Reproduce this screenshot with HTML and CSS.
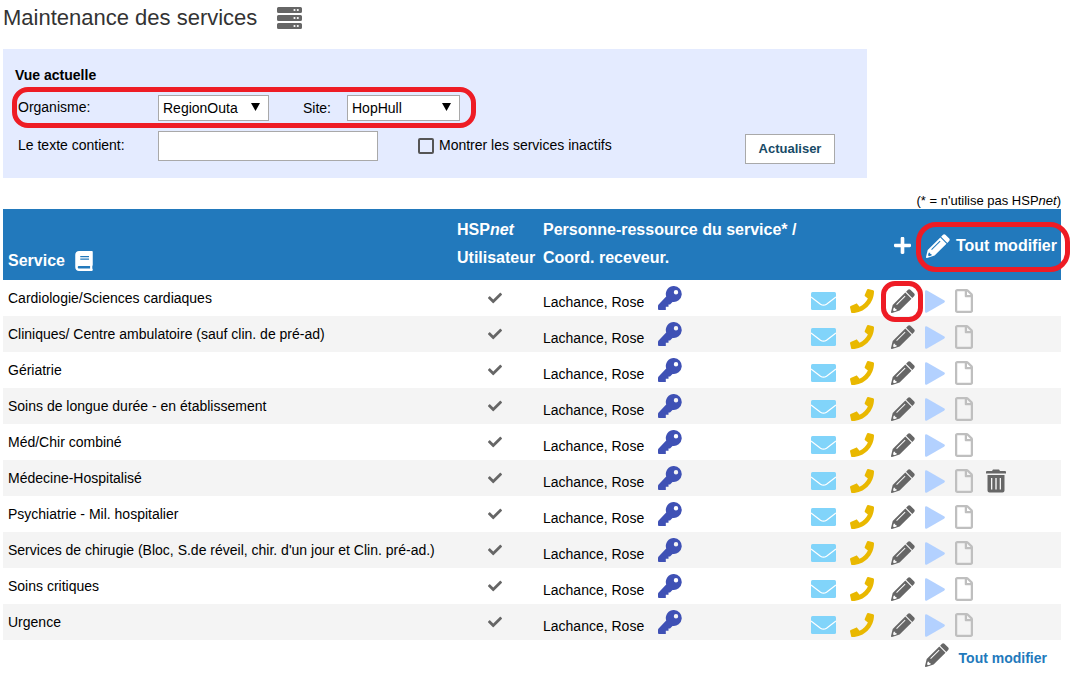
FILE: index.html
```html
<!DOCTYPE html>
<html lang="fr">
<head>
<meta charset="utf-8">
<title>Maintenance des services</title>
<link rel="stylesheet" href="styles.css">
</head>
<body>
<svg class="sprite" aria-hidden="true">
  <symbol id="key" viewBox="0 0 24 24"><path fill-rule="evenodd" d="M16 0a8 8 0 1 1-1.500 15.900L12 18.500H10.500v2.200H7.800V24H1q-1 0-1-1v-3q0-1 .6-1.600L8.200 10.500A8 8 0 0 1 16 0zm2 4a2.200 2.200 0 1 0 0 4.400A2.200 2.200 0 0 0 18 4z"/></symbol>
  <symbol id="pencil" viewBox="0 0 24 24"><path fill-rule="evenodd" d="M17 .8q1.200-1 2.400 0l3.800 3.800q1 1.200 0 2.400l-1.900 1.900-6.200-6.200zM14.300 3.500l6.200 6.200L8.600 21.600 1 23.900q-1.200.2-1-1L1.700 16zM5.200 15.300l.7.7 8.600-8.600-.7-.7zM2.700 18.800l-.7 2.400 1 1 2.500-.8v-1.500H4.200v-1.100z"/></symbol>
  <symbol id="phone" viewBox="0 0 512 512"><path d="M493.400 24.600l-104-24c-11.300-2.600-22.900 3.300-27.500 13.900l-48 112c-4.200 9.800-1.400 21.300 6.900 28l60.600 49.600c-36 76.700-98.900 140.500-177.200 177.200l-49.600-60.600c-6.800-8.300-18.200-11.100-28-6.900l-112 48C3.900 366.500-2 378.100.6 389.400l24 104C27.100 504.200 36.700 512 48 512c256.100 0 464-207.500 464-464 0-11.200-7.700-20.900-18.600-23.400z"/></symbol>
  <symbol id="mail" viewBox="0 0 25 18"><rect width="25" height="18" rx="1.500"/><path d="M0 5l9.500 7.200q3 2 6 0L25 5" fill="none" stroke="#fff" stroke-width="1.200"/></symbol>
  <symbol id="play" viewBox="0 0 20 23"><path d="M0 1.500Q.2-.3 2 .6L19 10.300q1.800 1.200 0 2.400L2 22.400q-1.800.9-2-.9z"/></symbol>
  <symbol id="file" viewBox="0 0 384 512"><path d="M369.900 97.900L286 14C277 5 264.800 0 252.100 0H48C21.500 0 0 21.500 0 48v416c0 26.500 21.500 48 48 48h288c26.500 0 48-21.500 48-48V131.900c0-12.700-5.100-25-14.100-34zM332.100 128H256V51.900l76.100 76.100zM48 464V48h160v104c0 13.300 10.700 24 24 24h104v288H48z"/></symbol>
  <symbol id="check" viewBox="0 0 512 512"><path d="M173.900 439.400l-166.400-166.400c-10-10-10-26.200 0-36.200l36.200-36.200c10-10 26.200-10 36.200 0L192 312.700 432.100 72.600c10-10 26.200-10 36.200 0l36.200 36.200c10 10 10 26.200 0 36.200l-294.400 294.400c-10 10-26.200 10-36.200 0z"/></symbol>
  <symbol id="plus" viewBox="0 32 448 448"><path d="M416 208H272V64c0-17.670-14.330-32-32-32h-32c-17.670 0-32 14.330-32 32v144H32c-17.670 0-32 14.330-32 32v32c0 17.670 14.330 32 32 32h144v144c0 17.670 14.330 32 32 32h32c17.670 0 32-14.330 32-32V304h144c17.670 0 32-14.330 32-32v-32c0-17.670-14.330-32-32-32z"/></symbol>
  <symbol id="book" viewBox="0 0 448 512"><path d="M448 360V24c0-13.300-10.700-24-24-24H96C43 0 0 43 0 96v320c0 53 43 96 96 96h328c13.300 0 24-10.700 24-24v-16c0-7.500-3.500-14.300-8.900-18.700-4.200-15.400-4.200-59.300 0-74.700 5.400-4.300 8.900-11.100 8.900-18.600zM128 134c0-3.300 2.700-6 6-6h212c3.300 0 6 2.700 6 6v20c0 3.300-2.700 6-6 6H134c-3.300 0-6-2.700-6-6v-20zm0 64c0-3.300 2.700-6 6-6h212c3.300 0 6 2.700 6 6v20c0 3.300-2.700 6-6 6H134c-3.300 0-6-2.700-6-6v-20zm253.400 250H96c-17.700 0-32-14.300-32-32 0-17.600 14.400-32 32-32h285.400c-1.900 17.100-1.900 46.900 0 64z"/></symbol>
  <symbol id="trash" viewBox="0 0 20 24"><path fill-rule="evenodd" d="M1 2h5l1-1.500h6L14 2h5a1 1 0 0 1 1 1v1.500H0V3a1 1 0 0 1 1-1zM1.500 6h17v15.500a2 2 0 0 1-2 2h-13a2 2 0 0 1-2-2zM5 9v11.500h1.300V9zm4.300 0v11.500h1.400V9zm4.400 0v11.500H15V9z"/></symbol>
  <symbol id="server" viewBox="0 0 25 22"><path fill-rule="evenodd" d="M1.500 0h22A1.500 1.500 0 0 1 25 1.500v3A1.500 1.500 0 0 1 23.500 6h-22A1.500 1.500 0 0 1 0 4.500v-3A1.500 1.500 0 0 1 1.500 0zM1.500 8h22A1.500 1.500 0 0 1 25 9.500v3a1.500 1.500 0 0 1-1.500 1.500h-22A1.500 1.500 0 0 1 0 12.500v-3A1.500 1.500 0 0 1 1.500 8zM1.500 16h22a1.500 1.500 0 0 1 1.500 1.500v3a1.500 1.500 0 0 1-1.500 1.500h-22A1.500 1.500 0 0 1 0 20.500v-3A1.500 1.500 0 0 1 1.500 16z"/><g fill="#fff"><circle cx="17.500" cy="3" r="1.100"/><circle cx="20.800" cy="3" r="1.100"/><circle cx="17.500" cy="11" r="1.100"/><circle cx="20.800" cy="11" r="1.100"/><circle cx="17.500" cy="19" r="1.100"/><circle cx="20.800" cy="19" r="1.100"/></g></symbol>
  <symbol id="arrow" viewBox="0 0 9 8"><path d="M0 0h9L4.500 8z"/></symbol>
</svg>

<h1 class="title">Maintenance des services <svg class="icon-server"><use href="#server"/></svg></h1>

<form class="filters">
  <h2 class="filters-title">Vue actuelle</h2>
  <div class="row row-marked">
    <label class="label" for="org">Organisme:</label>
    <span class="picker picker-org"><select id="org"><option>RegionOuta</option></select><svg><use href="#arrow"/></svg></span>
    <label class="label-site" for="site">Site:</label>
    <span class="picker"><select id="site"><option>HopHull</option></select><svg><use href="#arrow"/></svg></span>
  </div>
  <div class="row">
    <label class="label" for="text">Le texte contient:</label>
    <input class="text-box" id="text" type="text">
    <label class="check-label"><input type="checkbox">Montrer les services inactifs</label>
    <button class="refresh" type="button">Actualiser</button>
  </div>
</form>

<p class="note">(* = n'utilise pas HSP<i>net</i>)</p>

<table class="services">
  <colgroup><col><col class="col-user"><col class="col-contact"><col class="col-actions"></colgroup>
  <thead>
    <tr>
      <th class="head-service"><span class="service-title">Service <svg class="icon-book"><use href="#book"/></svg></span></th>
      <th>HSP<i>net</i><br>Utilisateur</th>
      <th>Personne-ressource du service* /<br>Coord. receveur.</th>
      <th class="head-actions">
        <div class="head-tools">
          <button type="button" aria-label="Ajouter"><svg class="icon-plus"><use href="#plus"/></svg></button>
          <button type="button" class="edit-all"><svg class="icon-pencil"><use href="#pencil"/></svg>Tout modifier</button>
        </div>
      </th>
    </tr>
  </thead>
  <tbody>
    <tr>
      <td>Cardiologie/Sciences cardiaques</td>
      <td class="user"><svg><use href="#check"/></svg></td>
      <td><div class="contact">Lachance, Rose <svg><use href="#key"/></svg></div></td>
      <td class="actions"><div class="tools"><button type="button" aria-label="Courriel" class="mail"><svg><use href="#mail"/></svg></button><button type="button" aria-label="Appeler" class="phone"><svg><use href="#phone"/></svg></button><button type="button" aria-label="Modifier" class="edit edit-marked"><svg><use href="#pencil"/></svg></button><button type="button" aria-label="Ouvrir" class="play"><svg><use href="#play"/></svg></button><button type="button" aria-label="Document" class="file"><svg><use href="#file"/></svg></button></div></td>
    </tr>
    <tr>
      <td>Cliniques/ Centre ambulatoire (sauf clin. de pré-ad)</td>
      <td class="user"><svg><use href="#check"/></svg></td>
      <td><div class="contact">Lachance, Rose <svg><use href="#key"/></svg></div></td>
      <td class="actions"><div class="tools"><button type="button" aria-label="Courriel" class="mail"><svg><use href="#mail"/></svg></button><button type="button" aria-label="Appeler" class="phone"><svg><use href="#phone"/></svg></button><button type="button" aria-label="Modifier" class="edit"><svg><use href="#pencil"/></svg></button><button type="button" aria-label="Ouvrir" class="play"><svg><use href="#play"/></svg></button><button type="button" aria-label="Document" class="file"><svg><use href="#file"/></svg></button></div></td>
    </tr>
    <tr>
      <td>Gériatrie</td>
      <td class="user"><svg><use href="#check"/></svg></td>
      <td><div class="contact">Lachance, Rose <svg><use href="#key"/></svg></div></td>
      <td class="actions"><div class="tools"><button type="button" aria-label="Courriel" class="mail"><svg><use href="#mail"/></svg></button><button type="button" aria-label="Appeler" class="phone"><svg><use href="#phone"/></svg></button><button type="button" aria-label="Modifier" class="edit"><svg><use href="#pencil"/></svg></button><button type="button" aria-label="Ouvrir" class="play"><svg><use href="#play"/></svg></button><button type="button" aria-label="Document" class="file"><svg><use href="#file"/></svg></button></div></td>
    </tr>
    <tr>
      <td>Soins de longue durée - en établissement</td>
      <td class="user"><svg><use href="#check"/></svg></td>
      <td><div class="contact">Lachance, Rose <svg><use href="#key"/></svg></div></td>
      <td class="actions"><div class="tools"><button type="button" aria-label="Courriel" class="mail"><svg><use href="#mail"/></svg></button><button type="button" aria-label="Appeler" class="phone"><svg><use href="#phone"/></svg></button><button type="button" aria-label="Modifier" class="edit"><svg><use href="#pencil"/></svg></button><button type="button" aria-label="Ouvrir" class="play"><svg><use href="#play"/></svg></button><button type="button" aria-label="Document" class="file"><svg><use href="#file"/></svg></button></div></td>
    </tr>
    <tr>
      <td>Méd/Chir combiné</td>
      <td class="user"><svg><use href="#check"/></svg></td>
      <td><div class="contact">Lachance, Rose <svg><use href="#key"/></svg></div></td>
      <td class="actions"><div class="tools"><button type="button" aria-label="Courriel" class="mail"><svg><use href="#mail"/></svg></button><button type="button" aria-label="Appeler" class="phone"><svg><use href="#phone"/></svg></button><button type="button" aria-label="Modifier" class="edit"><svg><use href="#pencil"/></svg></button><button type="button" aria-label="Ouvrir" class="play"><svg><use href="#play"/></svg></button><button type="button" aria-label="Document" class="file"><svg><use href="#file"/></svg></button></div></td>
    </tr>
    <tr>
      <td>Médecine-Hospitalisé</td>
      <td class="user"><svg><use href="#check"/></svg></td>
      <td><div class="contact">Lachance, Rose <svg><use href="#key"/></svg></div></td>
      <td class="actions"><div class="tools"><button type="button" aria-label="Courriel" class="mail"><svg><use href="#mail"/></svg></button><button type="button" aria-label="Appeler" class="phone"><svg><use href="#phone"/></svg></button><button type="button" aria-label="Modifier" class="edit"><svg><use href="#pencil"/></svg></button><button type="button" aria-label="Ouvrir" class="play"><svg><use href="#play"/></svg></button><button type="button" aria-label="Document" class="file"><svg><use href="#file"/></svg></button><button type="button" aria-label="Supprimer" class="trash"><svg><use href="#trash"/></svg></button></div></td>
    </tr>
    <tr>
      <td>Psychiatrie - Mil. hospitalier</td>
      <td class="user"><svg><use href="#check"/></svg></td>
      <td><div class="contact">Lachance, Rose <svg><use href="#key"/></svg></div></td>
      <td class="actions"><div class="tools"><button type="button" aria-label="Courriel" class="mail"><svg><use href="#mail"/></svg></button><button type="button" aria-label="Appeler" class="phone"><svg><use href="#phone"/></svg></button><button type="button" aria-label="Modifier" class="edit"><svg><use href="#pencil"/></svg></button><button type="button" aria-label="Ouvrir" class="play"><svg><use href="#play"/></svg></button><button type="button" aria-label="Document" class="file"><svg><use href="#file"/></svg></button></div></td>
    </tr>
    <tr>
      <td>Services de chirugie (Bloc, S.de réveil, chir. d'un jour et Clin. pré-ad.)</td>
      <td class="user"><svg><use href="#check"/></svg></td>
      <td><div class="contact">Lachance, Rose <svg><use href="#key"/></svg></div></td>
      <td class="actions"><div class="tools"><button type="button" aria-label="Courriel" class="mail"><svg><use href="#mail"/></svg></button><button type="button" aria-label="Appeler" class="phone"><svg><use href="#phone"/></svg></button><button type="button" aria-label="Modifier" class="edit"><svg><use href="#pencil"/></svg></button><button type="button" aria-label="Ouvrir" class="play"><svg><use href="#play"/></svg></button><button type="button" aria-label="Document" class="file"><svg><use href="#file"/></svg></button></div></td>
    </tr>
    <tr>
      <td>Soins critiques</td>
      <td class="user"><svg><use href="#check"/></svg></td>
      <td><div class="contact">Lachance, Rose <svg><use href="#key"/></svg></div></td>
      <td class="actions"><div class="tools"><button type="button" aria-label="Courriel" class="mail"><svg><use href="#mail"/></svg></button><button type="button" aria-label="Appeler" class="phone"><svg><use href="#phone"/></svg></button><button type="button" aria-label="Modifier" class="edit"><svg><use href="#pencil"/></svg></button><button type="button" aria-label="Ouvrir" class="play"><svg><use href="#play"/></svg></button><button type="button" aria-label="Document" class="file"><svg><use href="#file"/></svg></button></div></td>
    </tr>
    <tr>
      <td>Urgence</td>
      <td class="user"><svg><use href="#check"/></svg></td>
      <td><div class="contact">Lachance, Rose <svg><use href="#key"/></svg></div></td>
      <td class="actions"><div class="tools"><button type="button" aria-label="Courriel" class="mail"><svg><use href="#mail"/></svg></button><button type="button" aria-label="Appeler" class="phone"><svg><use href="#phone"/></svg></button><button type="button" aria-label="Modifier" class="edit"><svg><use href="#pencil"/></svg></button><button type="button" aria-label="Ouvrir" class="play"><svg><use href="#play"/></svg></button><button type="button" aria-label="Document" class="file"><svg><use href="#file"/></svg></button></div></td>
    </tr>
  </tbody>
</table>

<div class="footer">
  <button type="button" class="edit-all-bottom"><svg class="icon-pencil"><use href="#pencil"/></svg>Tout modifier</button>
</div>
</body>
</html>
```

FILE: styles.css
```css
* { box-sizing: border-box; }

body {
  margin: 0;
  padding: 0 13px 0 3px;
  background: #fff;
  color: #000;
  font: 14px/18px "Liberation Sans", Arial, sans-serif;
}

button, input, select { font: inherit; color: inherit; }
button { margin: 0; padding: 0; border: 0; background: none; cursor: pointer; }
svg { display: block; fill: currentColor; flex: none; }
.sprite { position: absolute; width: 0; height: 0; }

.title {
  display: flex;
  align-items: center;
  gap: 20px;
  margin: 0 0 13px;
  color: #333;
  font-size: 22px;
  font-weight: 400;
  line-height: 36px;
}
.icon-server { width: 25px; height: 22px; color: #666; }

/* Filter panel */
.filters {
  display: flex;
  flex-direction: column;
  gap: 10px;
  max-width: 864px;
  padding: 17px 32px 14px 12px;
  background: #e4ebff;
}
.filters-title { margin: 0 0 1px; font-size: 14px; line-height: 18px; }
.row { display: flex; align-items: flex-start; padding-left: 3px; }
.label { width: 140px; line-height: 28px; }
.row-marked { position: relative; align-self: flex-start; }
.row-marked .label { line-height: 24px; }
.label-site { width: 44px; margin-left: 34px; line-height: 26px; }
.picker { position: relative; width: 113px; }
.picker-org { width: 111px; }
.picker select {
  display: block;
  width: 100%;
  height: 26px;
  padding: 0 20px 0 4px;
  border: 1px solid #a9a9a9;
  border-radius: 0;
  background: #fff;
  appearance: none;
}
.picker svg {
  position: absolute;
  top: 8px;
  right: 9px;
  width: 9px;
  height: 8px;
  pointer-events: none;
}
.text-box {
  width: 220px;
  height: 30px;
  padding: 0 4px;
  border: 1px solid #a9a9a9;
  background: #fff;
}
.check-label {
  display: flex;
  align-items: center;
  gap: 5px;
  margin-left: 40px;
  line-height: 29px;
}
.check-label input {
  width: 16px;
  height: 16px;
  margin: 0;
  border: 2px solid #555;
  border-radius: 2px;
  appearance: none;
}
.check-label input:checked { background: #555; }
.refresh {
  width: 90px;
  height: 30px;
  margin: 3px 0 0 auto;
  border: 1px solid #a9a9a9;
  background: #fff;
  color: #174a66;
  font-size: 13px;
  font-weight: 700;
}

/* Red highlight rings */
.row-marked::after, .edit-all::after, .edit-marked::after {
  content: "";
  position: absolute;
  border: 5px solid #ee1c25;
  border-radius: 16px;
  pointer-events: none;
}
.row-marked::after { inset: -8px -16px -7px -3px; }
.edit-all::after { inset: -10px -13px -12px -10px; border-radius: 20px; }
.edit-marked::after { inset: -8px -8px -9px -10px; border-radius: 14px; }

.note { margin: 15px 0 0; font-size: 13px; line-height: 16px; text-align: right; }

/* Services table */
.services { width: 100%; border-collapse: collapse; table-layout: fixed; }
.col-user { width: 86px; }
.col-contact { width: 264px; }
.col-actions { width: 259px; }
.services th {
  padding: 7px 0 8px 5px;
  background: #2279bc;
  color: #fff;
  font-size: 16px;
  line-height: 28px;
  text-align: left;
  vertical-align: bottom;
  white-space: nowrap;
}
.services .head-service { padding-bottom: 5px; }
.service-title { display: flex; align-items: center; gap: 10px; }
.icon-book { width: 18px; height: 20px; }
.services .head-actions { padding: 2px 4px 0 0; vertical-align: middle; }
.head-tools { display: flex; justify-content: flex-end; align-items: center; gap: 15px; }
.icon-plus { width: 17px; height: 17px; }
.icon-pencil { width: 24px; height: 24px; }
.edit-all { position: relative; display: flex; align-items: center; gap: 6px; }

.services td { height: 36px; padding: 0 0 0 5px; }
.services tbody tr:nth-child(even) { background: #f4f4f4; }
.services .user { padding: 0; }
.user svg { width: 14px; height: 14px; margin: 0 auto; color: #666; }
.contact { display: flex; align-items: flex-end; gap: 14px; line-height: 16px; }
.contact svg { width: 24px; height: 24px; color: #3f51b5; }
.services .actions { padding: 6px 0 0 9px; }
.tools {
  display: grid;
  grid-template-columns: 39px 41px 34px 30px 31px 20px;
  align-items: center;
  justify-items: start;
}
.mail svg { width: 25px; height: 18px; color: #81d4fa; }
.phone svg { width: 24px; height: 24px; color: #e9b800; }
.edit { position: relative; }
.edit svg { width: 24px; height: 24px; color: #666; }
.play svg { width: 20px; height: 23px; color: #b3d1ff; }
.file svg { width: 18px; height: 24px; color: #bfbfbf; }
.trash svg { width: 20px; height: 24px; color: #666; }

.footer { display: flex; justify-content: flex-end; padding: 3px 14px 0 0; }
.edit-all-bottom {
  display: flex;
  align-items: flex-end;
  gap: 10px;
  color: #2279bc;
  font-weight: 700;
  line-height: 18px;
}
.edit-all-bottom svg { color: #666; }
```
